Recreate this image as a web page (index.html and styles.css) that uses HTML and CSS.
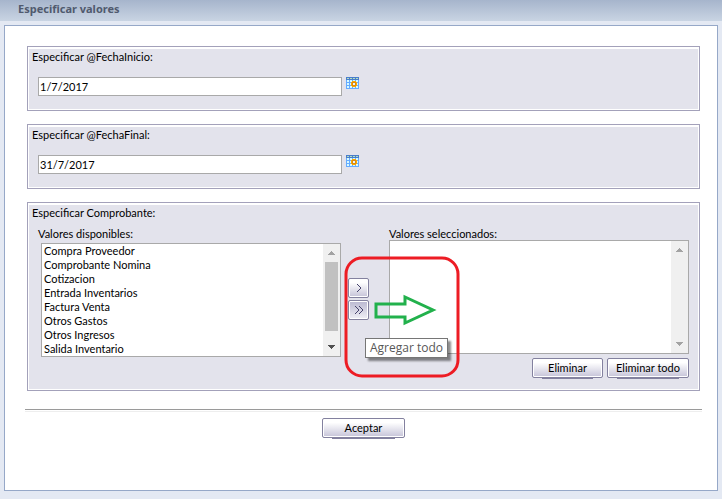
FILE: index.html
```html
<!DOCTYPE html>
<html lang="es">

<head>
    <meta charset="UTF-8">
    <meta name="viewport" content="width=device-width, initial-scale=1.0">
    <title>Especificar valores</title>
    <link rel="stylesheet" href="styles.css">
</head>

<body>
    <!-- calendar icon shared by both date rows -->
    <svg class="defs" width="0" height="0" aria-hidden="true">
        <symbol id="calendar" viewBox="0 0 13 12">
            <path fill="#66abff" d="M0 0h13v12H0z" />
            <path fill="#4a7ecb" d="M0 0h13v3H0z" />
            <path fill="#b5dfc0" d="M1 1h2v1H1zM4 1h2v1H4zM7 1h2v1H7zM10 1h2v1h-2z" />
            <path fill="#d8fbff" d="M1 3h2v2H1zM4 3h2v2H4zM7 3h2v2H7zM10 3h2v2h-2zM1 6h2v2H1zM4 6h2v2H4zM10 6h2v2h-2zM1 9h2v2H1zM4 9h2v2H4zM7 9h2v2H7zM10 9h2v2h-2z" />
            <path fill="#ffa500" d="M6 4h4v1h1v4h-1v1H6V9H5V5h1z" />
            <path fill="#d98d12" d="M6 5h4v4H6z" />
            <path fill="#e5f3ff" d="M7 6h2v2H7z" />
        </symbol>
    </svg>

    <header class="titlebar">
        <h1>Especificar valores</h1>
    </header>

    <main class="panel">
        <form>
            <div class="group">
                <label for="fecha-inicio">Especificar @FechaInicio:</label>
                <div class="date-row">
                    <input type="text" id="fecha-inicio" value="1/7/2017">
                    <button type="button" class="calendar" aria-label="Calendario"><svg width="13" height="12"><use href="#calendar" /></svg></button>
                </div>
            </div>

            <div class="group">
                <label for="fecha-final">Especificar @FechaFinal:</label>
                <div class="date-row">
                    <input type="text" id="fecha-final" value="31/7/2017">
                    <button type="button" class="calendar" aria-label="Calendario"><svg width="13" height="12"><use href="#calendar" /></svg></button>
                </div>
            </div>

            <div class="group group-picker">
                <div class="group-title">Especificar Comprobante:</div>
                <div class="picker">
                    <div class="available">
                        <label for="disponibles">Valores disponibles:</label>
                        <div class="listbox">
                            <select id="disponibles" multiple size="8">
                                <option>Compra Proveedor</option>
                                <option>Comprobante Nomina</option>
                                <option>Cotizacion</option>
                                <option>Entrada Inventarios</option>
                                <option>Factura Venta</option>
                                <option>Otros Gastos</option>
                                <option>Otros Ingresos</option>
                                <option>Salida Inventario</option>
                            </select>
                            <div class="scrollbar">
                                <svg width="7" height="4"><path fill="#a3a3a3" d="M3 0h1v1h1v1h1v1h1v1H0V3h1V2h1V1h1z" /></svg>
                                <div class="thumb"></div>
                                <svg width="7" height="4"><path fill="#505050" d="M0 0h7v1H6v1H5v1H4v1H3V3H2V2H1V1H0z" /></svg>
                            </div>
                        </div>
                    </div>

                    <div class="move">
                        <button type="button" class="btn arrow" aria-label="Agregar">
                            <svg width="8" height="8"><path d="M2 0l4 4-4 4" /></svg>
                        </button>
                        <button type="button" class="btn arrow hover" aria-label="Agregar todo">
                            <svg width="8" height="8"><path d="M0 0l4 4-4 4M4 0l4 4-4 4" /></svg>
                        </button>
                    </div>

                    <div class="selected">
                        <label for="seleccionados">Valores seleccionados:</label>
                        <div class="listbox">
                            <select id="seleccionados" multiple size="8"></select>
                            <div class="scrollbar">
                                <svg width="7" height="4"><path fill="#a3a3a3" d="M3 0h1v1h1v1h1v1h1v1H0V3h1V2h1V1h1z" /></svg>
                                <svg width="7" height="4"><path fill="#a3a3a3" d="M0 0h7v1H6v1H5v1H4v1H3V3H2V2H1V1H0z" /></svg>
                            </div>
                        </div>
                        <div class="actions">
                            <button type="button" class="btn remove">Eliminar</button>
                            <button type="button" class="btn remove-all">Eliminar todo</button>
                        </div>
                    </div>

                    <!-- help marks over the "add all" button -->
                    <svg class="marks" width="116" height="122" aria-hidden="true">
                        <rect x="2" y="2" width="112" height="118" rx="16" fill="none" stroke="#ed1c24" stroke-width="3" />
                        <path d="M32 48h29v-7l28 13-28 13v-6H32z" fill="none" stroke="#22b14c" stroke-width="3" />
                    </svg>
                    <div class="tooltip" role="tooltip">Agregar todo</div>
                </div>
            </div>

            <hr>

            <div class="submit">
                <button type="button" class="btn accept">Aceptar</button>
            </div>
        </form>
    </main>
</body>

</html>
```

FILE: styles.css
```css
* {
    box-sizing: border-box;
}

body {
    margin: 0;
    min-height: 100vh;
    display: flex;
    flex-direction: column;
    color: #000;
    background-color: #e4e9f3;
    font-family: Tahoma, Lato, sans-serif;
    font-size: 11px;
    line-height: 14px;
}

input,
select,
button {
    font: inherit;
    color: inherit;
}

svg {
    display: block;
}

.defs {
    position: absolute;
}

.titlebar {
    height: 21px;
    padding: 2px 18px;
    background: linear-gradient(#a6b5cc, #c9d4e3);
}

.titlebar h1 {
    margin: 0;
    color: #505a6e;
    font-family: Tahoma, 'Noto Sans', sans-serif;
    font-size: 11px;
    line-height: 14px;
}

.panel {
    flex: 1;
    margin: 4px 4px 8px;
    padding: 20px 17px 20px 22px;
    border: 1px solid #96a8c8;
    background-color: #fff;
}

/* Parameter groups */
.group {
    margin-bottom: 13px;
    padding: 0 3px 14px;
    border: 1px solid #a3a1ba;
    box-shadow: inset 0 2px #fff, inset 0 0 0 1px #fff;
    background-color: #e3e3ec;
}

.group-picker {
    padding-bottom: 12px;
}

.group > label,
.group-title {
    display: block;
    padding: 3px 1px 0;
}

.date-row {
    display: flex;
    gap: 4px;
    margin: 13px 7px 0;
}

.date-row input {
    width: 304px;
    height: 19px;
    padding: 1px;
    border: 1px solid #a9a9a9;
    background-color: #fff;
}

.calendar {
    align-self: flex-start;
    padding: 0;
    border: 0;
    background: none;
}

.picker {
    position: relative;
    display: flex;
    margin: 7px 7px 0;
}

.picker label {
    display: block;
    height: 13px;
}

.available .listbox {
    margin: 3px 0 0 3px;
}

.listbox {
    display: flex;
    width: 300px;
    height: 114px;
    border: 1px solid #a9a9a9;
    background-color: #fff;
}

.listbox select {
    flex: 1;
    height: 112px;
    padding: 0;
    border: 0;
    border-radius: 0;
    outline: 0;
    overflow: hidden;
    background-color: #fff;
}

.listbox option {
    min-height: 14px;
    padding: 0 2px;
    line-height: 14px;
}

/* Scroll bar */
.scrollbar {
    display: flex;
    flex-direction: column;
    align-items: center;
    justify-content: space-between;
    width: 17px;
    padding: 7px 0;
    background-color: #f0f0f0;
}

.scrollbar .thumb {
    width: 13px;
    height: 69px;
    margin-bottom: 8px;
    background-color: #c1c1c1;
}

/* Buttons */
.btn {
    position: relative;
    height: 20px;
    padding: 0;
    border: 1px solid #83819f;
    border-radius: 2px;
    box-shadow: inset 0 0 0 1px #fff;
    background: linear-gradient(#fff 20%, #c5c3d8);
}

.btn.remove::after,
.btn.remove-all::after,
.btn.accept::after {
    content: '';
    position: absolute;
    top: 19px;
    left: 9px;
    right: 9px;
    height: 1px;
    background-color: #83819f;
}

.move {
    display: flex;
    flex-direction: column;
    gap: 2px;
    width: 48px;
    padding: 51px 7px 0;
}

.arrow {
    display: flex;
    align-items: center;
    justify-content: center;
    width: 21px;
}

.arrow path {
    fill: none;
    stroke: #45426b;
}

.arrow.hover {
    background: linear-gradient(#b9b7d0, #f0f0f6);
}

.actions {
    display: flex;
    justify-content: flex-end;
    gap: 4px;
    margin-top: 4px;
}

.remove {
    width: 71px;
}

.remove-all {
    width: 82px;
}

.marks {
    position: absolute;
    top: 29px;
    left: 306px;
}

.tooltip {
    position: absolute;
    top: 111px;
    left: 327px;
    width: 83px;
    padding: 2px 0;
    border: 1px solid #767676;
    box-shadow: 3px 3px 2px rgba(0, 0, 0, 0.45);
    color: #575757;
    background-color: #fff;
    font-family: 'Segoe UI', 'Open Sans', sans-serif;
    font-size: 12px;
    line-height: 14px;
    text-align: center;
}

hr {
    margin: 18px -2px 6px;
    border: 0;
    border-top: 1px solid #9a9a9a;
    border-bottom: 1px solid #eee;
    height: 3px;
}

.submit {
    display: flex;
    justify-content: center;
}

.accept {
    width: 83px;
}
```
